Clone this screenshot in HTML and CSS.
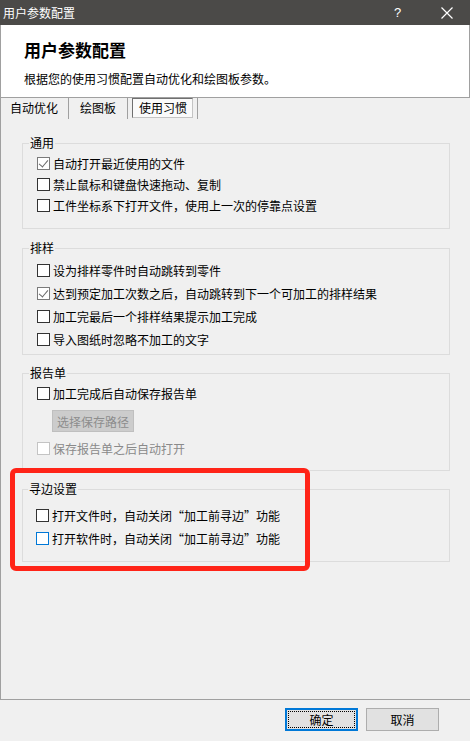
FILE: index.html
```html
<!DOCTYPE html>
<html>
<head>
    <meta charset="utf-8">
    <title>用户参数配置</title>
    <link rel="stylesheet" href="styles.css">
</head>
<body>
    <div class="titlebar">
        <span class="titlebar-text">用户参数配置</span>
        <span class="titlebar-help">?</span>
        <span class="titlebar-close">
            <svg width="12" height="12" viewBox="0 0 12 12"><path d="M0.5 0.5 L11.5 11.5 M11.5 0.5 L0.5 11.5" stroke="#fff" stroke-width="1.2" fill="none"/></svg>
        </span>
    </div>

    <div class="header">
        <h1>用户参数配置</h1>
        <p>根据您的使用习惯配置自动优化和绘图板参数。</p>
    </div>

    <div class="tabs">
        <div class="tab tab-first">自动优化</div>
        <div class="tab tab-second">绘图板</div>
        <div class="tab tab-active"><span class="tab-face">使用习惯</span></div>
    </div>

    <div class="panel">
        <fieldset class="group group-general">
            <legend>通用</legend>
            <label class="row"><span class="cb checked"></span>自动打开最近使用的文件</label>
            <label class="row"><span class="cb"></span>禁止鼠标和键盘快速拖动、复制</label>
            <label class="row"><span class="cb"></span>工件坐标系下打开文件，使用上一次的停靠点设置</label>
        </fieldset>

        <fieldset class="group group-nesting">
            <legend>排样</legend>
            <label class="row"><span class="cb"></span>设为排样零件时自动跳转到零件</label>
            <label class="row"><span class="cb checked"></span>达到预定加工次数之后，自动跳转到下一个可加工的排样结果</label>
            <label class="row"><span class="cb"></span>加工完最后一个排样结果提示加工完成</label>
            <label class="row"><span class="cb"></span>导入图纸时忽略不加工的文字</label>
        </fieldset>

        <fieldset class="group group-report">
            <legend>报告单</legend>
            <label class="row"><span class="cb"></span>加工完成后自动保存报告单</label>
            <div class="row-button"><button class="btn-disabled" disabled>选择保存路径</button></div>
            <label class="row disabled"><span class="cb"></span>保存报告单之后自动打开</label>
        </fieldset>

        <fieldset class="group group-edge">
            <legend>寻边设置</legend>
            <label class="row"><span class="cb"></span>打开文件时，自动关闭“加工前寻边”功能</label>
            <label class="row"><span class="cb focus"></span>打开软件时，自动关闭“加工前寻边”功能</label>
        </fieldset>
    </div>

    <div class="footer">
        <button class="btn btn-default"><span>确定</span></button>
        <button class="btn">取消</button>
    </div>

    <div class="highlight"></div>
</body>
</html>
```

FILE: styles.css
```css
* {
    box-sizing: border-box;
}

body {
    margin: 0;
    width: 470px;
    height: 741px;
    overflow: hidden;
    position: relative;
    background: #f0f0f0;
    color: #000;
    font-family: "Noto Sans CJK SC", "Microsoft YaHei", sans-serif;
    font-size: 12px;
}

/* title bar */
.titlebar {
    height: 25px;
    background: #4b4a48;
    color: #fff;
    display: flex;
    align-items: center;
    padding-left: 3px;
}

.titlebar-text {
    flex: 1;
    font-size: 12px;
    line-height: 16px;
}

.titlebar-help {
    width: 10px;
    margin-right: 37px;
    font-family: "Liberation Sans", sans-serif;
    font-size: 13px;
}

.titlebar-close {
    display: flex;
    margin-right: 17px;
}

/* header */
.header {
    height: 73px;
    background: #fff;
    border-left: 1px solid #a0a0a0;
    border-right: 1px solid #a0a0a0;
    border-bottom: 1px solid #a0a0a0;
    padding: 14px 0 0 23px;
}

.header h1 {
    margin: 0;
    font-size: 17px;
    font-weight: 700;
    line-height: 22px;
}

.header p {
    margin: 10px 0 0;
    font-size: 12px;
    line-height: 16px;
}

/* tabs */
.tabs {
    display: flex;
    height: 21px;
    border-left: 1px solid #a0a0a0;
}

.tab {
    line-height: 20px;
    border-right: 1px solid #a0a0a0;
}

.tab-first {
    padding: 0 10px 0 9px;
}

.tab-second {
    padding: 0 11px 0 11px;
}

.tab-active {
    padding: 0 4px 0 4px;
    display: flex;
    align-items: flex-start;
}

.tab-face {
    display: block;
    height: 20px;
    line-height: 18px;
    padding: 0 5px 0 6px;
    background: #fafafa;
    border-top: 1px solid #6f6f6f;
    border-left: 1px solid #6f6f6f;
    border-right: 1px solid #c4c4c4;
    border-bottom: 1px solid #c4c4c4;
}

/* tab page */
.panel {
    height: 581px;
    border-left: 1px solid #a0a0a0;
    border-bottom: 1px solid #a0a0a0;
    padding: 16px 0 0 21px;
}

.group {
    width: 428px;
    margin: 0;
    border: 1px solid #dcdcdc;
    padding: 0 0 0 14px;
}

.group legend {
    margin-left: -8px;
    padding: 0 1px;
    line-height: 16px;
}

.row {
    display: flex;
    align-items: center;
    height: 21px;
    line-height: 16px;
}

.cb {
    width: 13px;
    height: 13px;
    margin-right: 3px;
    border: 1px solid #333;
    background: #fff;
    flex: none;
    position: relative;
}

.cb.checked {
    border-color: #7a7a7a;
}

.cb.checked::after {
    content: "";
    position: absolute;
    left: 3px;
    top: 0px;
    width: 4px;
    height: 8px;
    border-right: 1.5px solid #6a6a6a;
    border-bottom: 1.5px solid #6a6a6a;
    transform: rotate(40deg);
}

.cb.focus {
    border-color: #0078d7;
}

.row.disabled {
    color: #8a8a8a;
}

.row.disabled .cb {
    border-color: #c4c4c4;
}

.group-general {
    padding-top: 2px;
    padding-bottom: 12px;
}

.group-nesting {
    margin-top: 11px;
    padding-top: 3px;
    padding-bottom: 3px;
}

.group-nesting .row {
    height: 23px;
}

.group-report {
    margin-top: 10px;
    padding-top: 2px;
    padding-bottom: 11px;
}

.row-button {
    padding: 6px 0 6px 15px;
}

.btn-disabled {
    display: block;
    height: 22px;
    width: 82px;
    padding: 0;
    font-family: inherit;
    font-size: 12px;
    color: #8d8d8d;
    background: #cccccc;
    border: 1px solid #bfbfbf;
}

.group-edge {
    margin-top: 10px;
    padding: 7px 0 11px 13px;
}

.group-edge .row {
    height: 23px;
}

/* dialog buttons */
.footer {
    display: flex;
    justify-content: flex-end;
    gap: 8px;
    padding: 8px 31px 0 0;
}

.btn {
    width: 73px;
    height: 23px;
    padding: 0;
    font-family: inherit;
    font-size: 12px;
    color: #000;
    background: #e1e1e1;
    border: 1px solid #adadad;
}

.btn-default {
    border: 2px solid #0078d7;
    padding: 1px;
}

.btn-default span {
    display: flex;
    align-items: center;
    justify-content: center;
    height: 100%;
    border: 1px dotted #000;
}

/* red annotation frame */
.highlight {
    position: absolute;
    left: 10px;
    top: 468px;
    width: 300px;
    height: 103px;
    border: 5px solid #ff2418;
    border-radius: 6px;
}
```
